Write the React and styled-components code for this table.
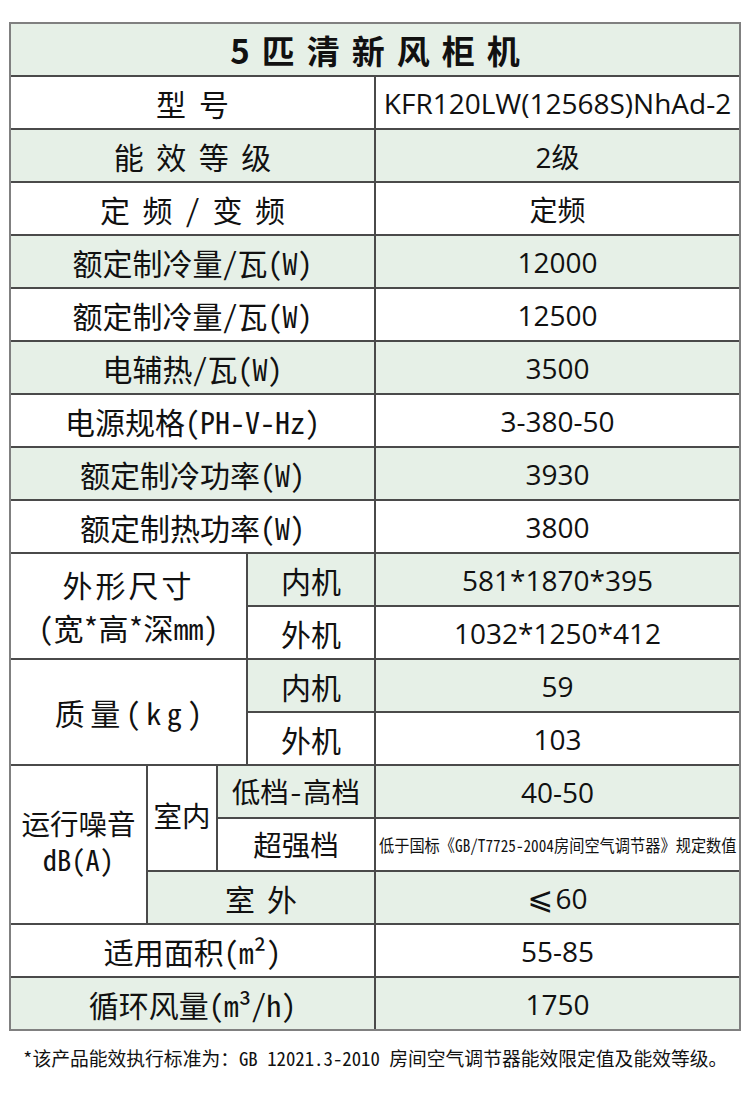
import styled, { createGlobalStyle } from "styled-components"

const GlobalStyle = createGlobalStyle`
  body {
    margin: 0;
    background: #fff;
  }
`

const GREEN = "#e6f0e7"
const LABEL_FONT = `"Noto Sans Mono CJK SC", "Noto Sans CJK SC", sans-serif`
const VALUE_FONT = `"Open Sans", "Noto Sans CJK SC", sans-serif`

const Page = styled.div`
  width: 750px;
  padding-top: 22px;
  padding-bottom: 40px;
`

// 表格：用 gap + 背景色画内部线
const SpecGrid = styled.div`
  margin-left: 9px;
  width: 732px;
  box-sizing: border-box;
  border: 2px solid #808080;
  background: #4a4a4a;
  display: grid;
  grid-template-columns: 135px 68px 28px 126px 363px;
  grid-auto-rows: 51px;
  gap: 2px;
  color: #111;
`

const Cell = styled.div`
  display: flex;
  flex-direction: column;
  align-items: center;
  justify-content: center;
  background: ${(p) => (p.$green ? GREEN : "#fff")};
  grid-column: span ${(p) => p.$cols || 1};
  grid-row: span ${(p) => p.$rows || 1};
  white-space: nowrap;
  overflow: hidden;
`

const TitleCell = styled(Cell)`
  font-family: "Noto Sans CJK SC", sans-serif;
  font-weight: 700;
  font-size: 33px;
  letter-spacing: 12px;
  padding-left: 12px;
`

const LabelCell = styled(Cell)`
  font-family: ${LABEL_FONT};
  font-size: ${(p) => p.$size || 30}px;
  line-height: ${(p) => p.$lh || 1.2};
  letter-spacing: ${(p) => p.$spacing || 0}px;
  padding-left: ${(p) => p.$spacing || 0}px;
  padding-bottom: ${(p) => p.$lift || 0}px;
`

const ValueCell = styled(Cell)`
  font-family: ${VALUE_FONT};
  font-size: 28px;
`

const FinePrint = styled.span`
  display: inline-block;
  font-family: ${LABEL_FONT};
  font-size: 17px;
  transform: scaleX(0.895);
`

const Lte = styled.span`
  font-family: "DejaVu Sans", sans-serif;
  font-size: 31px;
  margin-right: 2px;
`

const Footnote = styled.div`
  margin-top: 13px;
  padding-left: 23px;
  font-family: ${LABEL_FONT};
  font-size: 18.8px;
  color: #111;
  white-space: nowrap;
`

const simpleRows = [
  { label: "型号", value: "KFR120LW(12568S)NhAd-2", spacing: 13 },
  { label: "能效等级", value: "2级", spacing: 12.5 },
  { label: "定频/变频", value: "定频", spacing: 12.5 },
  { label: "额定制冷量/瓦(W)", value: "12000" },
  { label: "额定制冷量/瓦(W)", value: "12500" },
  { label: "电辅热/瓦(W)", value: "3500" },
  { label: "电源规格(PH-V-Hz)", value: "3-380-50" },
  { label: "额定制冷功率(W)", value: "3930" },
  { label: "额定制热功率(W)", value: "3800" },
]

const App = () => {
  return (
    <Page>
      <GlobalStyle />
      <SpecGrid>
        <TitleCell $cols={5} $green>
          5匹清新风柜机
        </TitleCell>

        {simpleRows.map((row, i) => [
          <LabelCell key={`l${i}`} $cols={4} $green={i % 2 === 1} $spacing={row.spacing}>
            {row.label}
          </LabelCell>,
          <ValueCell key={`v${i}`} $green={i % 2 === 1}>
            {row.value}
          </ValueCell>,
        ])}

        {/* 外形尺寸 */}
        <LabelCell $cols={3} $rows={2} $lh={1.45}>
          <div style={{ letterSpacing: "3px" }}>外形尺寸</div>
          <div>(宽*高*深mm)</div>
        </LabelCell>
        <LabelCell $green>内机</LabelCell>
        <ValueCell $green>581*1870*395</ValueCell>
        <LabelCell>外机</LabelCell>
        <ValueCell>1032*1250*412</ValueCell>

        {/* 质量 */}
        <LabelCell $cols={3} $rows={2} $spacing={5.5}>
          质量(kg)
        </LabelCell>
        <LabelCell $green>内机</LabelCell>
        <ValueCell $green>59</ValueCell>
        <LabelCell>外机</LabelCell>
        <ValueCell>103</ValueCell>

        {/* 运行噪音 */}
        <LabelCell $rows={3} $size={28.5} $lh={1.25} $lift={8}>
          <div>运行噪音</div>
          <div>dB(A)</div>
        </LabelCell>
        <LabelCell $rows={2} $size={28.5} $lift={6}>
          室内
        </LabelCell>
        <LabelCell $cols={2} $green $size={28.5}>
          低档-高档
        </LabelCell>
        <ValueCell $green>40-50</ValueCell>
        <LabelCell $cols={2} $size={28.5}>
          超强档
        </LabelCell>
        <ValueCell>
          <FinePrint>低于国标《GB/T7725-2004房间空气调节器》规定数值</FinePrint>
        </ValueCell>
        <LabelCell $cols={3} $green $spacing={12}>
          室外
        </LabelCell>
        <ValueCell $green>
          <span>
            <Lte>⩽</Lte>60
          </span>
        </ValueCell>

        <LabelCell $cols={4}>适用面积(m²)</LabelCell>
        <ValueCell>55-85</ValueCell>
        <LabelCell $cols={4} $green>
          循环风量(m³/h)
        </LabelCell>
        <ValueCell $green>1750</ValueCell>
      </SpecGrid>

      <Footnote>*该产品能效执行标准为：GB 12021.3-2010 房间空气调节器能效限定值及能效等级。</Footnote>
    </Page>
  )
}

export default App
